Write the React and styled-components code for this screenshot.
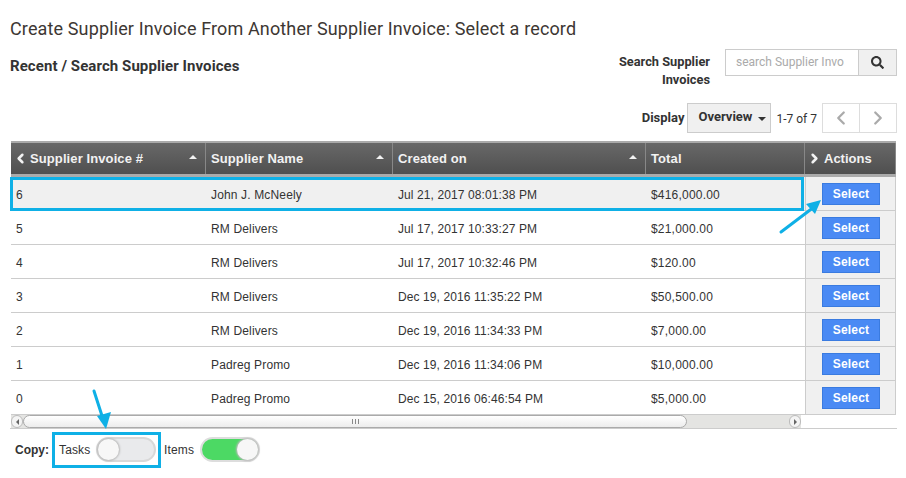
import React from "react";
import styled, { createGlobalStyle } from "styled-components";
import { ChevronLeft, ChevronRight } from "lucide-react";
import { FaSearch } from "react-icons/fa";

const GlobalStyle = createGlobalStyle`
  html, body {
    margin: 0;
    padding: 0;
    background: #fff;
    font-family: "Liberation Sans", Arial, sans-serif;
    color: #333;
  }
`;

const Page = styled.div`
  position: relative;
  width: 906px;
  height: 478px;
  overflow: hidden;
  box-sizing: border-box;
  padding: 18px 9px 0 10px;
`;

const Title = styled.h1`
  margin: 0;
  height: 22px;
  font: 400 18px/22px Roboto, sans-serif;
  letter-spacing: 0.13px;
  color: #3d3733;
`;

const TopRow = styled.div`
  display: flex;
  justify-content: space-between;
  margin-top: 8px;
  height: 58px;
  padding-top: 1px;
`;

const Heading = styled.h2`
  margin: 0;
  padding-top: 9px;
  font: 700 15px/16px Roboto, sans-serif;
  letter-spacing: 0.08px;
  color: #333;
`;

const SearchBox = styled.div`
  display: flex;
  align-items: flex-start;
`;

const SearchLabel = styled.label`
  width: 100px;
  margin: 4px 15px 0 0;
  text-align: right;
  font: 700 12.8px/18px Roboto, sans-serif;
  color: #333;
`;

const SearchInput = styled.div`
  box-sizing: border-box;
  width: 134px;
  height: 27px;
  padding-left: 10px;
  border: 1px solid #ccc;
  background: #fff;
  font: 400 12px/25px Roboto, sans-serif;
  color: #aaa;
  white-space: nowrap;
  overflow: hidden;
`;

const SearchButton = styled.button`
  box-sizing: border-box;
  width: 39px;
  height: 27px;
  margin-left: -1px;
  padding: 0;
  display: flex;
  align-items: center;
  justify-content: center;
  border: 1px solid #ccc;
  background: #f0f0f0;
  color: #333;
`;

const DisplayRow = styled.div`
  display: flex;
  justify-content: flex-end;
  align-items: center;
  height: 30px;
  margin-top: -4px;
`;

const DisplayLabel = styled.span`
  margin-right: 3px;
  font: 700 13px/18px Roboto, sans-serif;
`;

const DisplaySelect = styled.div`
  box-sizing: border-box;
  display: flex;
  align-items: center;
  gap: 6px;
  width: 84px;
  height: 30px;
  padding: 0 5px 2px 10px;
  border: 1px solid #ccc;
  background: #f0f0f0;
  font: 700 13px/18px Roboto, sans-serif;
  white-space: nowrap;
`;

const Caret = styled.span`
  width: 0;
  height: 0;
  margin-top: 3px;
  border-left: 4px solid transparent;
  border-right: 4px solid transparent;
  border-top: 4px solid #333;
`;

const PageCount = styled.span`
  margin: 2px 5px 0;
  font: 400 12px/18px Roboto, sans-serif;
  white-space: nowrap;
`;

const PagerButton = styled.div`
  box-sizing: border-box;
  width: 38px;
  height: 30px;
  margin-left: ${(p) => (p.$joined ? "-1px" : "0")};
  display: flex;
  align-items: center;
  justify-content: center;
  border: 1px solid #ddd;
  background: #fff;
  color: #aaa;
`;

const TableArea = styled.div`
  display: flex;
  margin-top: 8px;
  margin-left: 1px;
`;

const MainColumn = styled.div`
  width: 794px;
`;

const ActionsColumn = styled.div`
  width: 91px;
`;

const HeadRow = styled.div`
  display: grid;
  grid-template-columns: ${(p) => p.$columns};
  height: 36px;
  box-sizing: border-box;
  border-top: 2px solid #aaa;
  border-bottom: 3px solid #aaa;
  background: linear-gradient(#686868, #4f4f4f);
`;

const HeadCell = styled.div`
  display: flex;
  align-items: center;
  justify-content: space-between;
  box-sizing: border-box;
  padding: 0 8px 0 5px;
  border-right: 1px solid #888;
  font: 700 13px/16px "Liberation Sans", Arial, sans-serif;
  letter-spacing: ${(p) => p.$spacing || "0.1px"};
  color: #f2f2f2;
`;

const HeadLabel = styled.span`
  display: flex;
  align-items: center;
  gap: 2px;
  margin-left: -3px;
`;

const SortMark = styled.span`
  width: 0;
  height: 0;
  margin-bottom: 3px;
  border-left: 4px solid transparent;
  border-right: 4px solid transparent;
  border-bottom: 4px solid #f2f2f2;
`;

const Row = styled.div`
  position: relative;
  display: grid;
  grid-template-columns: ${(p) => p.$columns};
  height: 34px;
  box-sizing: border-box;
  border-bottom: 1px solid #ccc;
  background: ${(p) => (p.$active ? "#f0f0f0" : "#fff")};
`;

const RowHighlight = styled.span`
  position: absolute;
  top: 0;
  left: -1px;
  right: 1px;
  bottom: -1px;
  box-sizing: border-box;
  border: 3px solid #0fb0e6;
`;

const Cell = styled.div`
  padding: 2px 0 0 5px;
  font: 400 12px/32px "Liberation Sans", Arial, sans-serif;
  letter-spacing: ${(p) => p.$spacing || "0.15px"};
  color: #333;
`;

const ScrollTrack = styled.div`
  display: flex;
  align-items: center;
  justify-content: space-between;
  width: 790px;
  height: 13px;
  background: #e4e4e2;
`;

const ScrollEnd = styled.div`
  width: 12px;
  height: 13px;
  display: flex;
  align-items: center;
  justify-content: center;
  box-sizing: border-box;
  border-radius: 7px;
  border: 1px solid #bbb;
  background: #f4f4f4;
`;

const ScrollArrow = styled.span`
  width: 0;
  height: 0;
  border-top: 3px solid transparent;
  border-bottom: 3px solid transparent;
  ${(p) => (p.$dir === "left" ? "border-right: 3px solid #666;" : "border-left: 3px solid #666;")}
`;

const ScrollThumb = styled.div`
  box-sizing: border-box;
  width: 664px;
  height: 13px;
  margin-right: auto;
  display: flex;
  align-items: center;
  justify-content: center;
  border: 1px solid #aaa;
  border-radius: 7px;
  background: linear-gradient(#fff, #ececec);
`;

const ScrollGrip = styled.span`
  width: 7px;
  height: 5px;
  background: repeating-linear-gradient(90deg, #888 0 1px, transparent 1px 3px);
`;

const ActionCell = styled.div`
  height: 34px;
  box-sizing: border-box;
  display: flex;
  align-items: center;
  justify-content: center;
  background: #f0f0f0;
  border-left: 1px solid #ccc;
  border-right: 1px solid #ccc;
  border-bottom: 1px solid #ccc;
`;

const SelectButton = styled.button`
  box-sizing: border-box;
  width: 58px;
  height: 22px;
  margin-left: 1px;
  padding: 0;
  border: 1px solid #3a7be0;
  background: #4a8af4;
  color: #fff;
  font: 700 12px/18px "Liberation Sans", Arial, sans-serif;
  letter-spacing: 0.2px;
`;

const CopyRow = styled.div`
  display: flex;
  align-items: center;
  height: 42px;
  border-top: 1px solid #ccc;
  padding-left: 5px;
`;

const CopyLabel = styled.strong`
  font: 700 12px/16px "Liberation Sans", Arial, sans-serif;
  margin-right: 3px;
`;

const ToggleGroup = styled.div`
  display: flex;
  align-items: center;
  gap: 6px;
  height: 36px;
  box-sizing: border-box;
  padding-left: ${(p) => (p.$boxed ? "4px" : "3px")};
  width: ${(p) => (p.$boxed ? "109px" : "auto")};
  border: ${(p) => (p.$boxed ? "3px solid #0fb0e6" : "0")};
  font: 400 12px/16px "Liberation Sans", Arial, sans-serif;
  letter-spacing: 0.15px;
`;

const Toggle = styled.span`
  position: relative;
  display: block;
  flex: none;
  box-sizing: border-box;
  width: 60px;
  height: 25px;
  margin-top: -2px;
  border-radius: 13px;
  border: 2px solid ${(p) => (p.$on ? "#ddd" : "#d8d8d8")};
  background: ${(p) => (p.$on ? "#4cd964" : "#e9eaec")};
`;

const Knob = styled.span`
  position: absolute;
  top: 0;
  ${(p) => (p.$on ? "right: 0;" : "left: 0;")}
  width: 21px;
  height: 21px;
  border-radius: 50%;
  background: #f7f7f7;
  box-shadow: 0 0 2px 1px #bbb;
`;

const ArrowLayer = styled.svg`
  position: absolute;
  left: 0;
  top: 0;
  pointer-events: none;
`;

const columns = "195px 187px 253px 159px";

const invoices = [
  ["6", "John J. McNeely", "Jul 21, 2017 08:01:38 PM", "$416,000.00"],
  ["5", "RM Delivers", "Jul 17, 2017 10:33:27 PM", "$21,000.00"],
  ["4", "RM Delivers", "Jul 17, 2017 10:32:46 PM", "$120.00"],
  ["3", "RM Delivers", "Dec 19, 2016 11:35:22 PM", "$50,500.00"],
  ["2", "RM Delivers", "Dec 19, 2016 11:34:33 PM", "$7,000.00"],
  ["1", "Padreg Promo", "Dec 19, 2016 11:34:06 PM", "$10,000.00"],
  ["0", "Padreg Promo", "Dec 15, 2016 06:46:54 PM", "$5,000.00"],
];

export default function App() {
  return (
    <Page>
      <GlobalStyle />
      <Title>Create Supplier Invoice From Another Supplier Invoice: Select a record</Title>
      <TopRow>
        <Heading>Recent / Search Supplier Invoices</Heading>
        <SearchBox>
          <SearchLabel>Search Supplier Invoices</SearchLabel>
          <SearchInput>search Supplier Invo</SearchInput>
          <SearchButton>
            <FaSearch size={13} />
          </SearchButton>
        </SearchBox>
      </TopRow>
      <DisplayRow>
        <DisplayLabel>Display</DisplayLabel>
        <DisplaySelect>
          Overview <Caret />
        </DisplaySelect>
        <PageCount>1-7 of 7</PageCount>
        <PagerButton>
          <ChevronLeft size={22} strokeWidth={2.5} />
        </PagerButton>
        <PagerButton $joined>
          <ChevronRight size={22} strokeWidth={2.5} />
        </PagerButton>
      </DisplayRow>
      <TableArea>
        <MainColumn>
          <HeadRow $columns={columns}>
            <HeadCell>
              <HeadLabel>
                <ChevronLeft size={15} strokeWidth={4} />
                Supplier Invoice #
              </HeadLabel>
              <SortMark />
            </HeadCell>
            <HeadCell>
              Supplier Name <SortMark />
            </HeadCell>
            <HeadCell>
              Created on <SortMark />
            </HeadCell>
            <HeadCell>Total</HeadCell>
          </HeadRow>
          {invoices.map((row, i) => (
            <Row key={row[0]} $columns={columns} $active={i === 0}>
              <Cell>{row[0]}</Cell>
              <Cell>{row[1]}</Cell>
              <Cell $spacing="0.1px">{row[2]}</Cell>
              <Cell $spacing="0.2px">{row[3]}</Cell>
              {i === 0 && <RowHighlight />}
            </Row>
          ))}
          <ScrollTrack>
            <ScrollEnd>
              <ScrollArrow $dir="left" />
            </ScrollEnd>
            <ScrollThumb>
              <ScrollGrip />
            </ScrollThumb>
            <ScrollEnd>
              <ScrollArrow $dir="right" />
            </ScrollEnd>
          </ScrollTrack>
        </MainColumn>
        <ActionsColumn>
          <HeadRow $columns="1fr">
            <HeadCell $spacing="0">
              <HeadLabel>
                <ChevronRight size={15} strokeWidth={4} />
                Actions
              </HeadLabel>
            </HeadCell>
          </HeadRow>
          {invoices.map((row) => (
            <ActionCell key={row[0]}>
              <SelectButton>Select</SelectButton>
            </ActionCell>
          ))}
        </ActionsColumn>
      </TableArea>
      <CopyRow>
        <CopyLabel>Copy:</CopyLabel>
        <ToggleGroup $boxed>
          Tasks
          <Toggle>
            <Knob />
          </Toggle>
        </ToggleGroup>
        <ToggleGroup>
          Items
          <Toggle $on>
            <Knob $on />
          </Toggle>
        </ToggleGroup>
      </CopyRow>
      <ArrowLayer width="906" height="478">
        <g stroke="#0fb0e6" strokeWidth="3" fill="none" strokeLinecap="round">
          <path d="M781 232 L814 207" />
          <path d="M94 391 L104 422" />
        </g>
        <path d="M821 200 L806 204 L815 214 Z" fill="#0fb0e6" />
        <path d="M106 429 L97 416 L111 412 Z" fill="#0fb0e6" />
      </ArrowLayer>
    </Page>
  );
}
